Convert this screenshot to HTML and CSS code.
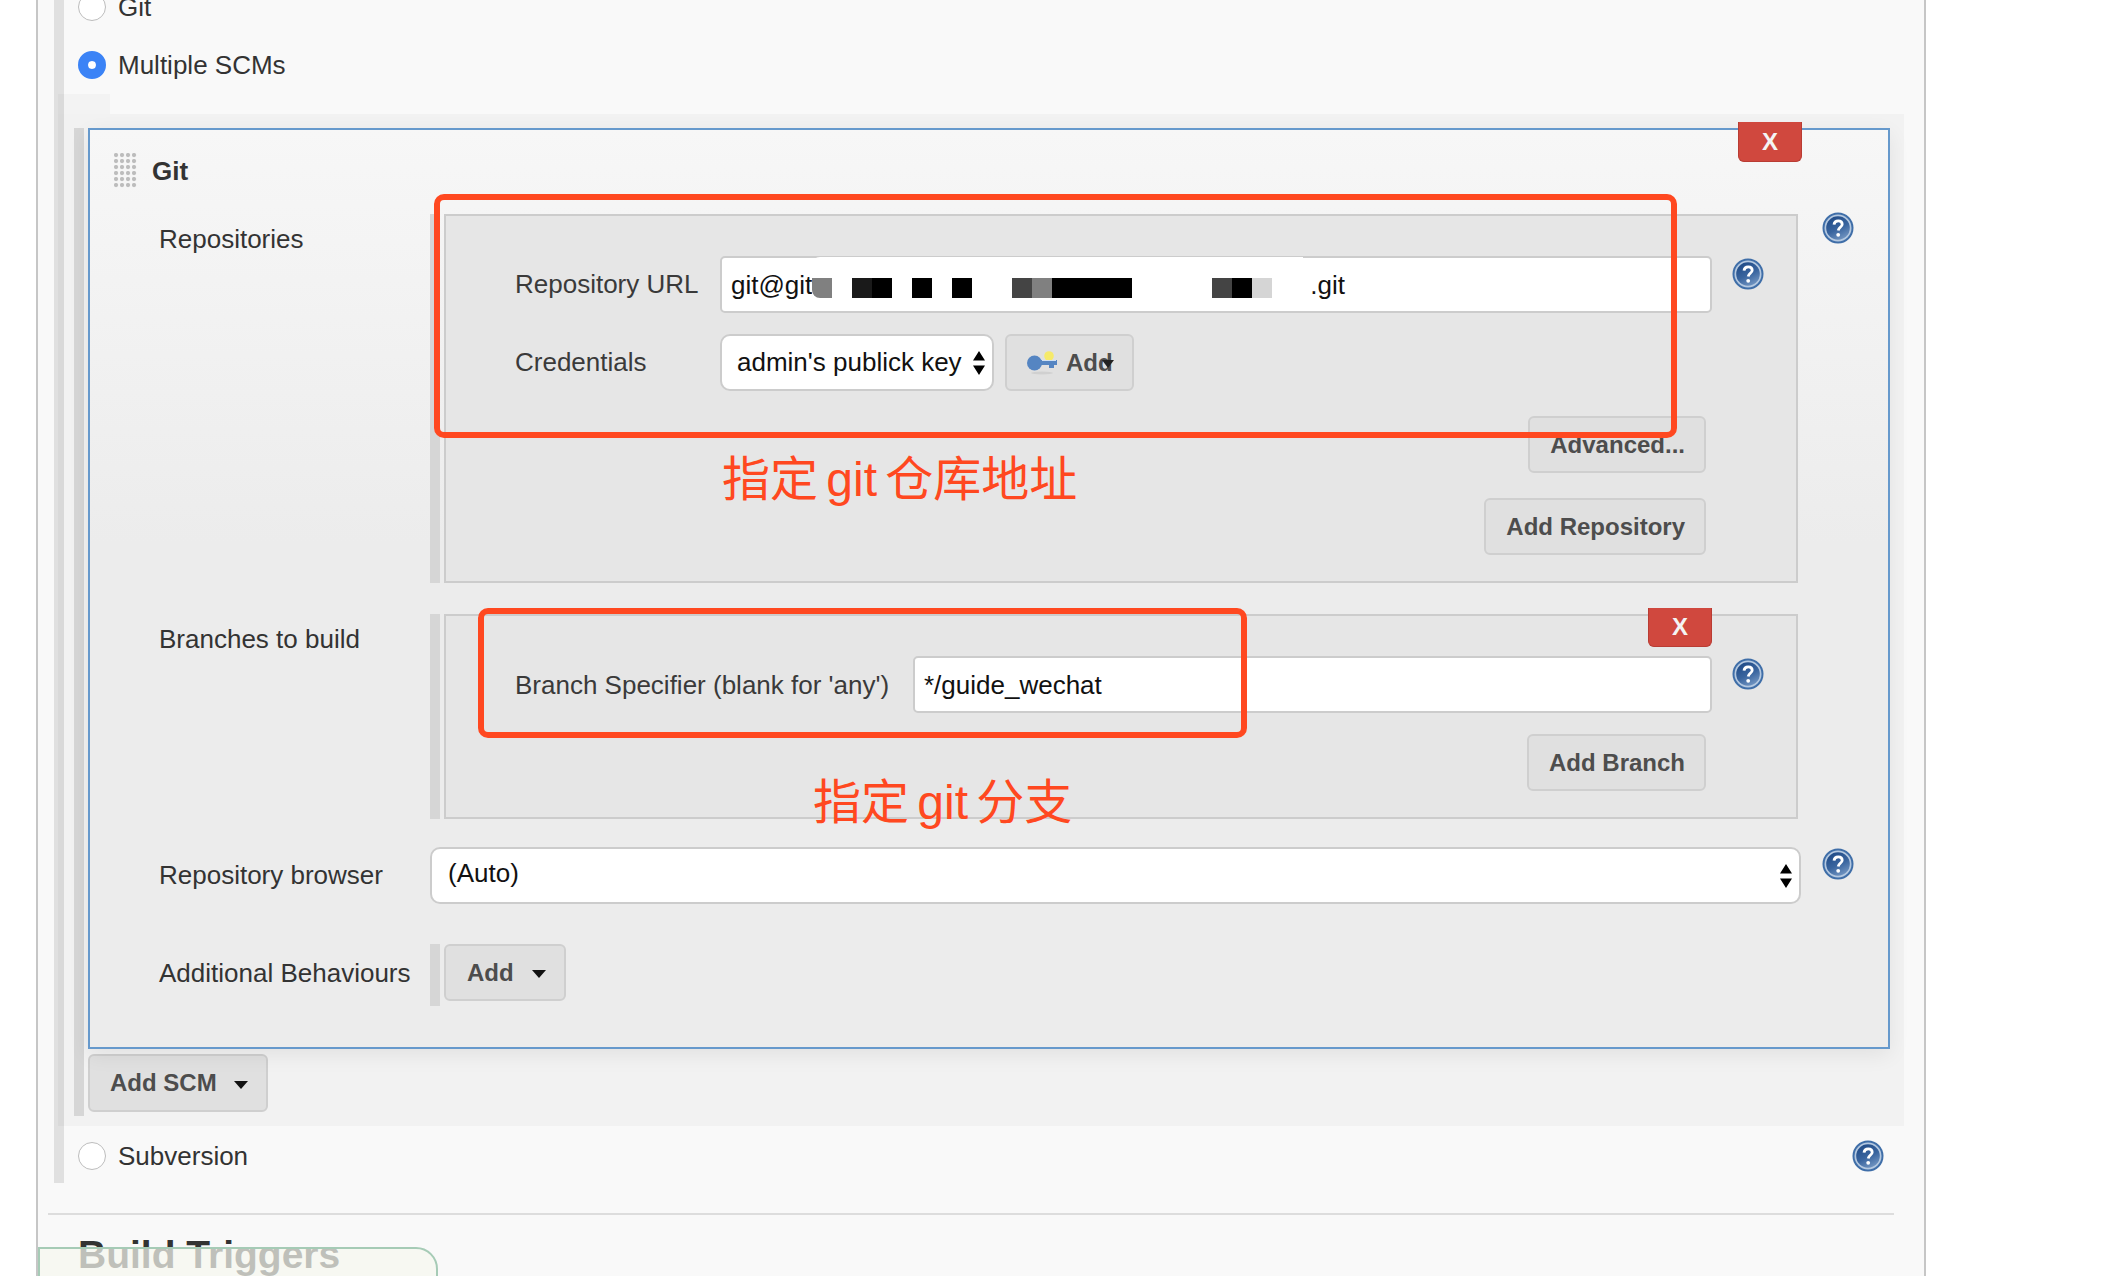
FILE: index.html
```html
<!DOCTYPE html>
<html lang="en">
<head>
    <meta charset="UTF-8">
    <meta name="viewport" content="width=device-width, initial-scale=1.0">
    <title>Source Code Management</title>
    <link rel="stylesheet" href="styles.css">
</head>
<body>
    <svg class="icon-defs" width="0" height="0">
        <defs>
            <linearGradient id="helpFill" x1="0.2" y1="0" x2="0.7" y2="1">
                <stop offset="0" stop-color="#1f4a86"/>
                <stop offset="0.55" stop-color="#3a659f"/>
                <stop offset="1" stop-color="#7396c2"/>
            </linearGradient>
            <symbol id="help" viewBox="0 0 32 32">
                <circle cx="16" cy="16" r="15.500" fill="#3f6ea8"/>
                <circle cx="16" cy="16" r="13.500" fill="#b4c8e0"/>
                <circle cx="16" cy="16" r="11.800" fill="url(#helpFill)"/>
                <path d="M12 12.600c.3-2.500 1.900-3.800 4.200-3.800 2.400 0 4 1.400 4 3.400 0 2.900-3.700 3.200-4 6.300" fill="none" stroke="#fff" stroke-width="2.800"/>
                <circle cx="16.200" cy="22.800" r="1.900" fill="#fff"/>
            </symbol>
            <symbol id="updown" viewBox="0 0 12 24">
                <path d="M6 0l6 9.500H0zM0 14.500h12L6 24z" fill="#000"/>
            </symbol>
        </defs>
    </svg>

    <div class="page">
        <div class="section">
            <label class="radio-row">
                <span class="radio"></span>
                <span>Git</span>
            </label>
            <label class="radio-row">
                <span class="radio checked"></span>
                <span>Multiple SCMs</span>
            </label>

            <div class="notch"></div>
            <div class="scm-wrap">
                <div class="scm-list">
                    <div class="scm-box">
                        <button class="delete-btn scm-delete">X</button>
                        <div class="scm-head">
                            <span class="grip"></span>
                            <b>Git</b>
                        </div>

                        <div class="form-row row-repos">
                            <div class="form-label">Repositories</div>
                            <div class="repeat">
                                <div class="repeat-box">
                                    <div class="field-row">
                                        <div class="field-label label-repo">Repository URL</div>
                                        <div class="text-input">git@git<span class="tail">.git</span></div>
                                        <svg class="help"><use href="#help"/></svg>
                                    </div>
                                    <div class="field-row">
                                        <div class="field-label label-repo">Credentials</div>
                                        <div class="select select-cred">
                                            admin's publick key
                                            <svg class="updown"><use href="#updown"/></svg>
                                        </div>
                                        <button class="btn btn-cred">
                                            <svg class="key" viewBox="0 0 30 24">
                                                <ellipse cx="15" cy="22" rx="11" ry="1.500" fill="#d0d0d0"/>
                                                <circle cx="22" cy="5" r="4.800" fill="#f6ea6a"/>
                                                <ellipse cx="7.500" cy="12" rx="7.500" ry="7.500" fill="#5585c2"/>
                                                <path d="M10 9h20v5h-3v3h-5v-3H10z" fill="#5585c2"/>
                                                <path d="M15 9.500h14" stroke="#cfe0f2" stroke-width="1"/>
                                            </svg>
                                            <span>Add</span>
                                            <i class="stray-arrow"></i>
                                        </button>
                                    </div>
                                    <div class="btn-row">
                                        <button class="btn">Advanced...</button>
                                    </div>
                                    <div class="btn-row">
                                        <button class="btn">Add Repository</button>
                                    </div>
                                </div>
                                <div class="redact">
                                    <span class="cell mid round"></span><span class="cell"></span>
                                    <span class="cell ink"></span><span class="cell black"></span><span class="cell"></span>
                                    <span class="cell black"></span><span class="cell"></span>
                                    <span class="cell black"></span><span class="cell"></span><span class="cell"></span>
                                    <span class="cell dark"></span><span class="cell mid"></span>
                                    <span class="cell black"></span><span class="cell black"></span><span class="cell black"></span><span class="cell black"></span>
                                    <span class="cell"></span><span class="cell"></span><span class="cell"></span><span class="cell"></span>
                                    <span class="cell dark"></span><span class="cell black"></span><span class="cell light"></span>
                                </div>
                            </div>
                            <svg class="help help-outer"><use href="#help"/></svg>
                        </div>

                        <div class="form-row row-branches">
                            <div class="form-label">Branches to build</div>
                            <div class="repeat">
                                <div class="repeat-box">
                                    <button class="delete-btn branch-delete">X</button>
                                    <div class="field-row">
                                        <div class="field-label label-branch">Branch Specifier (blank for 'any')</div>
                                        <div class="text-input">*/guide_wechat</div>
                                        <svg class="help"><use href="#help"/></svg>
                                    </div>
                                    <div class="btn-row">
                                        <button class="btn">Add Branch</button>
                                    </div>
                                </div>
                            </div>
                        </div>

                        <div class="form-row row-browser">
                            <div class="form-label">Repository browser</div>
                            <div class="select select-wide">
                                (Auto)
                                <svg class="updown"><use href="#updown"/></svg>
                            </div>
                            <svg class="help help-outer"><use href="#help"/></svg>
                        </div>

                        <div class="form-row row-behaviours">
                            <div class="form-label">Additional Behaviours</div>
                            <div class="repeat repeat-plain">
                                <button class="btn btn-menu">Add<i class="caret"></i></button>
                            </div>
                        </div>
                    </div>

                    <button class="btn btn-menu btn-scm">Add SCM<i class="caret"></i></button>
                </div>
            </div>

            <div class="radio-row row-svn">
                <label class="radio-label">
                    <span class="radio"></span>
                    <span>Subversion</span>
                </label>
                <svg class="help"><use href="#help"/></svg>
            </div>
        </div>

        <div class="section-rule"></div>
        <h2 class="section-title">Build Triggers</h2>
    </div>

    <!-- floating note cut off by the bottom of the window -->
    <div class="float-note"></div>

    <!-- annotations drawn on top of the screenshot -->
    <div class="mark mark-repo"></div>
    <div class="note note-repo">指定 git 仓库地址</div>
    <div class="mark mark-branch"></div>
    <div class="note note-branch">指定 git 分支</div>
</body>
</html>
```

FILE: styles.css
```css
:root {
    --panel: #f9f9f9;
    --bar: #d6d6d6;
    --line: #cccccc;
    --blue: #6699cc;
    --red: #ff4820;
    --text: #333333;
}

* {
    margin: 0;
    padding: 0;
    box-sizing: border-box;
}

html,
body {
    height: 1276px;
    overflow: hidden;
}

body {
    position: relative;
    background: #ffffff;
    font-family: "Liberation Sans", "Noto Sans CJK SC", sans-serif;
    font-size: 26px;
    color: var(--text);
}

.icon-defs {
    position: absolute;
}

.page {
    width: 1890px;
    height: 1276px;
    margin-left: 36px;
    background: var(--panel);
    border-left: 2px solid #c6c6c6;
    border-right: 2px solid #c6c6c6;
    overflow: hidden;
}

.section {
    width: 1850px;
    height: 1205px;
    margin: -22px 0 0 16px;
    border-left: 10px solid #e0e0e0;
}

.radio-row {
    display: flex;
    align-items: center;
    gap: 12px;
    height: 58px;
    padding-left: 14px;
}

.radio-label {
    display: flex;
    align-items: center;
    gap: 12px;
}

.radio {
    width: 28px;
    height: 28px;
    border-radius: 50%;
    background: #ffffff;
    border: 1px solid #bdbdbd;
}

.radio.checked {
    background: #3b83f6;
    border: 10px solid #3b83f6;
    background-clip: padding-box;
    box-shadow: inset 0 0 0 8px #ffffff;
}

.notch {
    width: 52px;
    height: 20px;
    margin-left: -6px;
    background: rgba(0, 0, 0, 0.022);
}

.scm-wrap {
    width: 1846px;
    height: 1012px;
    margin-left: -6px;
    padding: 14px 0 0 16px;
    background: rgba(0, 0, 0, 0.028);
}

.scm-list {
    height: 988px;
    width: 1816px;
    border-left: 10px solid var(--bar);
    padding-left: 4px;
}

.scm-box {
    position: relative;
    height: 921px;
    border: 2px solid var(--blue);
    background: linear-gradient(#f7f7f7, #ececec 45%);
    box-shadow: 0 6px 20px rgba(0, 0, 0, 0.07);
    padding-left: 69px;
}

.scm-head {
    display: flex;
    align-items: center;
    height: 84px;
    margin-left: -45px;
    padding-bottom: 2px;
    gap: 15px;
    font-size: 26px;
}

.grip {
    width: 23px;
    height: 36px;
    background: radial-gradient(circle at 2px 2px, #bcbcbc 1.500px, transparent 2.600px) 0 0 / 6px 6px;
}

.form-row {
    display: flex;
    align-items: flex-start;
}

.form-label {
    width: 271px;
    flex: none;
    line-height: 30px;
    padding-top: 10px;
}

.row-repos {
    height: 369px;
}

.row-branches {
    height: 205px;
    margin-top: 31px;
}

.row-browser {
    margin-top: 28px;
    height: 56px;
}

.row-browser .form-label {
    padding-top: 13px;
}

.row-behaviours {
    margin-top: 41px;
}

.row-behaviours .form-label {
    padding-top: 14px;
}

.repeat {
    position: relative;
    width: 1368px;
    height: 100%;
    flex: none;
    border-left: 10px solid var(--bar);
    padding-left: 4px;
}

.repeat-plain {
    width: auto;
    height: 62px;
}

.repeat-box {
    position: relative;
    height: 100%;
    padding: 40px 32px 0 69px;
    background: #e6e6e6;
    border: 2px solid var(--line);
}

.field-row {
    display: flex;
    align-items: center;
    height: 57px;
    margin-bottom: 21px;
}

.row-repos .field-row + .field-row {
    margin-bottom: 25px;
}

.field-label {
    flex: none;
    color: #3a3a3a;
}

.label-repo {
    width: 205px;
}

.label-branch {
    width: 398px;
    padding-top: 2px;
}

.text-input {
    flex: 1;
    display: flex;
    align-items: center;
    height: 57px;
    padding: 2px 0 0 9px;
    background: #ffffff;
    border: 2px solid var(--line);
    border-radius: 5px;
    color: #111111;
}

.tail {
    margin-left: 498px;
}

.help {
    width: 32px;
    height: 32px;
    flex: none;
    align-self: flex-start;
    margin: 2px 0 0 20px;
}

.row-repos > .help-outer {
    margin: -2px 0 0 24px;
}

.row-browser > .help-outer {
    margin: 1px 0 0 21px;
}

.select {
    position: relative;
    display: flex;
    align-items: center;
    background: #ffffff;
    border: 2px solid var(--line);
    border-radius: 10px;
    color: #111111;
}

.select-cred {
    width: 274px;
    height: 57px;
    flex: none;
    padding-left: 15px;
}

.select-wide {
    width: 1371px;
    height: 57px;
    flex: none;
    padding: 0 0 4px 16px;
}

.updown {
    position: absolute;
    top: 15px;
    right: 7px;
    width: 12px;
    height: 24px;
}

.btn {
    height: 57px;
    padding: 0 19px 0 20px;
    background: #e0e0e0;
    border: 2px solid #cfcfcf;
    border-radius: 6px;
    font: bold 24px "Liberation Sans", sans-serif;
    color: #4d4d4d;
}

.btn-row {
    display: flex;
    justify-content: flex-end;
    margin: 25px 58px 0 0;
}

.field-row + .btn-row {
    margin-top: 0;
}

.btn-cred {
    position: relative;
    display: flex;
    align-items: center;
    flex: none;
    width: 129px;
    margin-left: 11px;
    padding: 0 0 0 20px;
    gap: 9px;
}

.key {
    width: 30px;
    height: 24px;
}

.stray-arrow {
    position: absolute;
    left: 95px;
    top: 24px;
    border: 6px solid transparent;
    border-top: 8px solid #222222;
    border-bottom: 0;
}

.btn-menu {
    display: flex;
    align-items: center;
    justify-content: space-between;
}

.caret {
    border: 7px solid transparent;
    border-top: 8px solid #111111;
    border-bottom: 0;
    margin-left: 16px;
    margin-top: 3px;
}

.btn-scm {
    width: 180px;
    margin-top: 5px;
    padding: 0 18px 0 20px;
    height: 58px;
}

.row-behaviours .btn-menu {
    width: 122px;
    padding: 0 18px 0 21px;
}

.delete-btn {
    position: absolute;
    width: 64px;
    background: #d0483e;
    border: 1px solid #b93c33;
    border-top: 0;
    border-radius: 0 0 6px 6px;
    font: bold 24px "Liberation Sans", sans-serif;
    color: #f4f4f4;
}

.scm-delete {
    top: -8px;
    right: 86px;
    height: 40px;
}

.branch-delete {
    top: -8px;
    right: 84px;
    height: 39px;
}

/* white patch someone painted over the url, with the leftover blocks */
.redact {
    position: absolute;
    left: 372px;
    top: 43px;
    width: 491px;
    height: 43px;
    display: flex;
    padding-top: 21px;
    background: #ffffff;
    border-top-left-radius: 8px;
}

.cell {
    width: 20px;
    height: 20px;
}

.mid {
    background: #808080;
}

.ink {
    background: #1a1a1a;
}

.black {
    background: #000000;
}

.dark {
    background: #444444;
}

.light {
    background: #d5d5d5;
}

.round {
    border-bottom-left-radius: 8px;
}

.row-svn {
    justify-content: space-between;
    height: 58px;
    margin-top: 1px;
}

.row-svn .help {
    align-self: center;
    margin: 0 20px 0 0;
}

.section-rule {
    width: 1846px;
    height: 2px;
    margin: 30px 0 0 10px;
    background: #dddddd;
}

.section-title {
    margin: 18px 0 0 40px;
    font-size: 39px;
    line-height: 44px;
    color: #333333;
}

.float-note {
    position: absolute;
    left: 38px;
    top: 1247px;
    width: 400px;
    height: 60px;
    background: rgba(245, 247, 238, 0.72);
    border: 2px solid #a6cbb6;
    border-radius: 0 22px 0 0;
}

.mark {
    position: absolute;
    border: 6px solid var(--red);
    border-radius: 10px;
}

.mark-repo {
    left: 434px;
    top: 194px;
    width: 1243px;
    height: 244px;
}

.mark-branch {
    left: 478px;
    top: 608px;
    width: 769px;
    height: 130px;
}

.note {
    position: absolute;
    font-size: 48px;
    line-height: 56px;
    word-spacing: -5px;
    color: var(--red);
    white-space: nowrap;
}

.note-repo {
    left: 722px;
    top: 452px;
}

.note-branch {
    left: 813px;
    top: 775px;
}
```
